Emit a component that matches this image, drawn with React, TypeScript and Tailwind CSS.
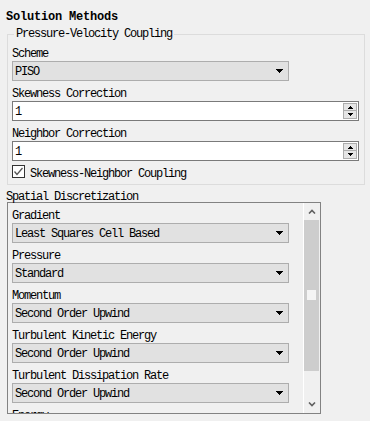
import React from 'react';

const Arrow = () => (
  <svg width="7" height="4" viewBox="0 0 7 4" shapeRendering="crispEdges">
    <polygon points="0,0 7,0 3.5,4" fill="#000" />
  </svg>
);

const Dropdown = ({ value }: { value: string }) => (
  <div className="flex h-[20px] w-[277px] items-center border border-[#adadad] bg-[#e1e1e1] pl-[2px] pr-[5px]">
    <span className="flex-1 pt-[2px] leading-[18px]">{value}</span>
    <Arrow />
  </div>
);

const Label = ({ text }: { text: string }) => (
  <div className="h-[20px] pt-[3px] leading-[20px] whitespace-nowrap">{text}</div>
);

const Spinner = () => (
  <div className="flex h-[16px] w-[14px] flex-col">
    <div className="flex h-[8px] items-center justify-center border border-[#adadad] bg-[#e5e5e5]">
      <svg width="5" height="3" viewBox="0 0 5 3" shapeRendering="crispEdges">
        <polygon points="2.5,0 5,3 0,3" fill="#000" />
      </svg>
    </div>
    <div className="flex h-[8px] items-center justify-center border border-t-0 border-[#adadad] bg-[#e5e5e5]">
      <svg width="5" height="3" viewBox="0 0 5 3" shapeRendering="crispEdges">
        <polygon points="0,0 5,0 2.5,3" fill="#000" />
      </svg>
    </div>
  </div>
);

const NumberField = ({ value }: { value: string }) => (
  <div className="flex h-[20px] w-[347px] items-center border border-[#7a7a7a] bg-white pl-[2px] pr-[1px]">
    <span className="flex-1 pt-[2px] leading-[18px]">{value}</span>
    <Spinner />
  </div>
);

const Chevron = ({ up }: { up?: boolean }) => (
  <svg width="8" height="5" viewBox="0 0 8 5">
    <path d={up ? 'M1 4.5 L4 1.5 L7 4.5' : 'M1 0.5 L4 3.5 L7 0.5'} fill="none" stroke="#606060" strokeWidth="1.6" />
  </svg>
);

const schemes = [
  { label: 'Gradient', value: 'Least Squares Cell Based' },
  { label: 'Pressure', value: 'Standard' },
  { label: 'Momentum', value: 'Second Order Upwind' },
  { label: 'Turbulent Kinetic Energy', value: 'Second Order Upwind' },
  { label: 'Turbulent Dissipation Rate', value: 'Second Order Upwind' },
  { label: 'Energy', value: 'Second Order Upwind' },
];

export default function App() {
  return (
    <div className="h-[421px] w-[370px] overflow-hidden bg-[#f0f0f0] font-['Liberation_Mono',monospace] text-[12px] tracking-[-1.2px] text-black">
      <div className="h-[27px] pl-[6px] pt-[7px] leading-[20px] font-bold tracking-[-0.2px]">Solution Methods</div>

      <fieldset className="ml-[7px] w-[358px] border border-[#dcdcdc] px-[4px]">
        <legend className="ml-[2px] px-[2px] leading-[14px]">Pressure-Velocity Coupling</legend>
        <Label text="Scheme" />
        <Dropdown value="PISO" />
        <Label text="Skewness Correction" />
        <NumberField value="1" />
        <Label text="Neighbor Correction" />
        <NumberField value="1" />
        <div className="flex h-[23px] items-start">
          <div className="mt-[4px] flex h-[13px] w-[13px] items-center justify-center border border-[#333] bg-white">
            <svg width="11" height="11" viewBox="0 0 11 11">
              <path d="M1.5 5.5 L4 8.5 L9.5 2" fill="none" stroke="#555" strokeWidth="1.3" />
            </svg>
          </div>
          <span className="ml-[5px] pt-[3px] leading-[20px]">Skewness-Neighbor Coupling</span>
        </div>
      </fieldset>

      <div className="h-[17px] pl-[6px] pt-[2px] leading-[20px]">Spatial Discretization</div>

      <div className="ml-[7px] flex h-[212px] w-[314px] border border-[#828282]">
        <div className="flex-1 overflow-hidden pl-[4px]">
          {schemes.map((s) => (
            <div key={s.label}>
              <Label text={s.label} />
              <Dropdown value={s.value} />
            </div>
          ))}
        </div>
        <div className="flex w-[17px] flex-col border-l border-white bg-[#f0f0f0]">
          <div className="flex h-[17px] items-center justify-center">
            <Chevron up />
          </div>
          <div className="h-[151px] w-[15px] bg-[#cdcdcd] pl-[3px] pt-[70px]">
            <div className="h-[10px] w-[9px] bg-[#f4f4f4]" />
          </div>
          <div className="flex-1" />
          <div className="flex h-[17px] items-center justify-center">
            <Chevron />
          </div>
        </div>
      </div>
    </div>
  );
}
